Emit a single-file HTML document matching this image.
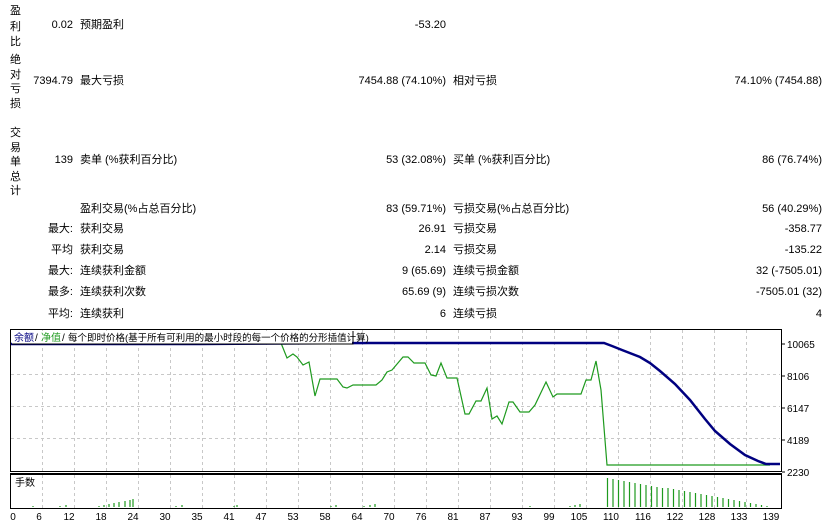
<!DOCTYPE html>
<html><head><meta charset="utf-8"><style>
body{margin:0;width:836px;height:527px;background:#fff;overflow:hidden;position:relative;font-family:"Liberation Sans","Noto Sans CJK SC",sans-serif;font-size:11px;color:#000}
.t{position:absolute;white-space:nowrap;line-height:14px}
.r{text-align:right}
</style></head><body>
<div class="t" style="left:10px;top:4px;width:12px;line-height:15.5px">盈<br>利<br>比</div>
<div class="t" style="left:10px;top:53px;width:12px;line-height:14.5px">绝<br>对<br>亏<br>损</div>
<div class="t" style="left:10px;top:126px;width:12px;line-height:14.5px">交<br>易<br>单<br>总<br>计</div>

<div class="t r" style="left:20px;width:53px;top:18px">0.02</div>
<div class="t" style="left:80px;top:18px">预期盈利</div>
<div class="t r" style="left:300px;width:146px;top:18px">-53.20</div>

<div class="t r" style="left:20px;width:53px;top:74px">7394.79</div>
<div class="t" style="left:80px;top:74px">最大亏损</div>
<div class="t r" style="left:300px;width:146px;top:74px">7454.88 (74.10%)</div>
<div class="t" style="left:453px;top:74px">相对亏损</div>
<div class="t r" style="left:600px;width:222px;top:74px">74.10% (7454.88)</div>

<div class="t r" style="left:20px;width:53px;top:153px">139</div>
<div class="t" style="left:80px;top:153px">卖单 (%获利百分比)</div>
<div class="t r" style="left:300px;width:146px;top:153px">53 (32.08%)</div>
<div class="t" style="left:453px;top:153px">买单 (%获利百分比)</div>
<div class="t r" style="left:600px;width:222px;top:153px">86 (76.74%)</div>

<div class="t" style="left:80px;top:202px">盈利交易(%占总百分比)</div>
<div class="t r" style="left:300px;width:146px;top:202px">83 (59.71%)</div>
<div class="t" style="left:453px;top:202px">亏损交易(%占总百分比)</div>
<div class="t r" style="left:600px;width:222px;top:202px">56 (40.29%)</div>

<div class="t r" style="left:20px;width:53px;top:222px">最大:</div>
<div class="t" style="left:80px;top:222px">获利交易</div>
<div class="t r" style="left:300px;width:146px;top:222px">26.91</div>
<div class="t" style="left:453px;top:222px">亏损交易</div>
<div class="t r" style="left:600px;width:222px;top:222px">-358.77</div>

<div class="t r" style="left:20px;width:53px;top:243px">平均</div>
<div class="t" style="left:80px;top:243px">获利交易</div>
<div class="t r" style="left:300px;width:146px;top:243px">2.14</div>
<div class="t" style="left:453px;top:243px">亏损交易</div>
<div class="t r" style="left:600px;width:222px;top:243px">-135.22</div>

<div class="t r" style="left:20px;width:53px;top:264px">最大:</div>
<div class="t" style="left:80px;top:264px">连续获利金额</div>
<div class="t r" style="left:300px;width:146px;top:264px">9 (65.69)</div>
<div class="t" style="left:453px;top:264px">连续亏损金额</div>
<div class="t r" style="left:600px;width:222px;top:264px">32 (-7505.01)</div>

<div class="t r" style="left:20px;width:53px;top:285px">最多:</div>
<div class="t" style="left:80px;top:285px">连续获利次数</div>
<div class="t r" style="left:300px;width:146px;top:285px">65.69 (9)</div>
<div class="t" style="left:453px;top:285px">连续亏损次数</div>
<div class="t r" style="left:600px;width:222px;top:285px">-7505.01 (32)</div>

<div class="t r" style="left:20px;width:53px;top:307px">平均:</div>
<div class="t" style="left:80px;top:307px">连续获利</div>
<div class="t r" style="left:300px;width:146px;top:307px">6</div>
<div class="t" style="left:453px;top:307px">连续亏损</div>
<div class="t r" style="left:600px;width:222px;top:307px">4</div>

<svg width="836" height="527" style="position:absolute;left:0;top:0" xmlns="http://www.w3.org/2000/svg">
<g stroke="#c8c8c8" stroke-dasharray="3,3" stroke-width="1">
<path d="M42.5 330V472M74.5 330V472M106.5 330V472M138.5 330V472M170.5 330V472M202.5 330V472M234.5 330V472M266.5 330V472M298.5 330V472M330.5 330V472M362.5 330V472M394.5 330V472M426.5 330V472M458.5 330V472M490.5 330V472M522.5 330V472M554.5 330V472M586.5 330V472M618.5 330V472M650.5 330V472M682.5 330V472M714.5 330V472M746.5 330V472"/>
<path d="M42.5 475V508M74.5 475V508M106.5 475V508M138.5 475V508M170.5 475V508M202.5 475V508M234.5 475V508M266.5 475V508M298.5 475V508M330.5 475V508M362.5 475V508M394.5 475V508M426.5 475V508M458.5 475V508M490.5 475V508M522.5 475V508M554.5 475V508M586.5 475V508M618.5 475V508M650.5 475V508M682.5 475V508M714.5 475V508M746.5 475V508"/>
<path d="M11 374.5H780M11 406.5H780M11 438.5H780"/>
</g>
<polyline fill="none" stroke="#1e9a1e" stroke-width="1.2" points="281,343 287,358 293,354 297,357 303,365 309,362 315,396 320,379 337,379 343,387 347,388 353,385 376,385 382,380 387,372 392,370 403,357 408,357 414,363 425,363 431,375 436,376 441,363 447,378 457,378 465,414 469,414 476,401 481,401 487,388 492,419 497,416 502,424 509,402 513,402 520,412 529,412 535,405 546,382 553,397 557,394 581,394 586,380 591,380 596,361 601,390 607,465 770,465"/>
<polyline fill="none" stroke="#000080" stroke-width="2.5" points="11,344 200,344 370,343 604,343 612,346 622,350 640,357 650,363 660,371 675,384 690,400 705,419 715,431 730,444 745,455 758,461 766,464 780,464"/>
<g stroke="#1e9a1e" stroke-width="1.2">
<path d="M33 507v-1M60 507v-1M66 507v-2M99 507v-1M104 507v-2M109 507v-3M114 507v-4M119 507v-5M125 507v-6M130 507v-7M133 507v-8M176 507v-1M182 507v-2M234 507v-1M237 507v-2M331 507v-1M336 507v-2M364 507v-1M370 507v-2M375 507v-3M530 507v-1M570 507v-1M575 507v-2M580 507v-3"/>
<path d="M607.5 507V478M613 507V479M618.5 507V480M624 507V481M629.5 507V482M635 507V483M640.5 507V484M646 507V485M651.5 507V486M657 507V487M662.5 507V488M668 507V488M673.5 507V489M679 507V490M684.5 507V491M690 507V492M695.5 507V493M701 507V494M706.5 507V495M712 507V496M717.5 507V497M723 507V498M728.5 507V499M734 507V500M739.5 507V501M745 507V502M750.5 507V503M756 507V504M761.5 507V505M767 507V506"/>
</g>
<rect x="10.5" y="329.5" width="771" height="142" fill="none" stroke="#000"/>
<path d="M10 473.5H782" stroke="#000"/>
<rect x="10.5" y="474.5" width="771" height="34" fill="none" stroke="#000"/>
<g stroke="#000"><path d="M782 344h3M782 376h3M782 408h3M782 440h3M782 472h3"/></g>
<rect x="12" y="331" width="340" height="13" fill="#fff"/>
<path d="M12 344H353V331" fill="none" stroke="#000" stroke-width="1"/>
<g font-family="Liberation Sans,Noto Sans CJK SC,sans-serif" font-size="10">
<text x="14" y="341" fill="#000080">余额</text><text x="35" y="341">/</text>
<text x="41" y="341" fill="#1e9a1e">净值</text><text x="62" y="341">/</text>
<text x="68" y="341" font-size="9.5">每个即时价格(基于所有可利用的最小时段的每一个价格的分形插值计算)</text>
<text x="15" y="486">手数</text>
</g>
<g font-family="Liberation Sans,sans-serif" font-size="10" fill="#000">
<text x="787" y="348">10065</text><text x="787" y="380">8106</text><text x="787" y="412">6147</text><text x="787" y="444">4189</text><text x="787" y="476">2230</text>
</g>
<g font-family="Liberation Sans,sans-serif" font-size="10" text-anchor="middle">
<text x="13" y="520">0</text><text x="39" y="520">6</text><text x="69" y="520">12</text><text x="101" y="520">18</text><text x="133" y="520">24</text><text x="165" y="520">30</text><text x="197" y="520">35</text><text x="229" y="520">41</text><text x="261" y="520">47</text><text x="293" y="520">53</text><text x="325" y="520">58</text><text x="357" y="520">64</text><text x="389" y="520">70</text><text x="421" y="520">76</text><text x="453" y="520">81</text><text x="485" y="520">87</text><text x="517" y="520">93</text><text x="549" y="520">99</text><text x="579" y="520">105</text><text x="611" y="520">110</text><text x="643" y="520">116</text><text x="675" y="520">122</text><text x="707" y="520">128</text><text x="739" y="520">133</text><text x="771" y="520">139</text>
</g>
</svg>
</body></html>
